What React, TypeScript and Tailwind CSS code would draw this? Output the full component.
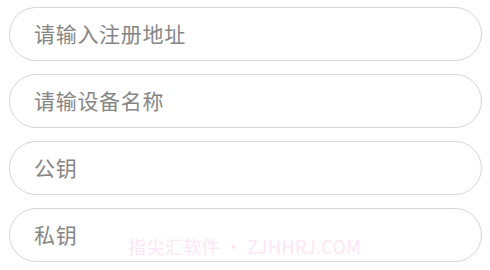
import React from "react";

const fields = ["请输入注册地址", "请输设备名称", "公钥", "私钥"];

export default function App() {
  return (
    <div
      className="relative w-[490px] h-[270px] bg-white overflow-hidden"
      style={{ fontFamily: '"Noto Sans CJK SC", "Noto Sans", sans-serif' }}
    >
      <div className="flex flex-col gap-[13px] pl-[9px] pr-[8px] pt-[7px]">
        {fields.map((f) => (
          <div
            key={f}
            className="h-[54px] rounded-full border border-[#d6d6d6] bg-white flex items-center pl-[24px]"
          >
            <span className="text-[21px] leading-none tracking-[0.7px] text-[#868686] -mt-[1px]">{f}</span>
          </div>
        ))}
      </div>
      <div className="absolute left-[128px] top-[234px] text-[18px] leading-[24px] tracking-[0.4px] text-[#fde6f6] whitespace-nowrap pointer-events-none">
        指尖汇软件 • ZJHHRJ.COM
      </div>
    </div>
  );
}
